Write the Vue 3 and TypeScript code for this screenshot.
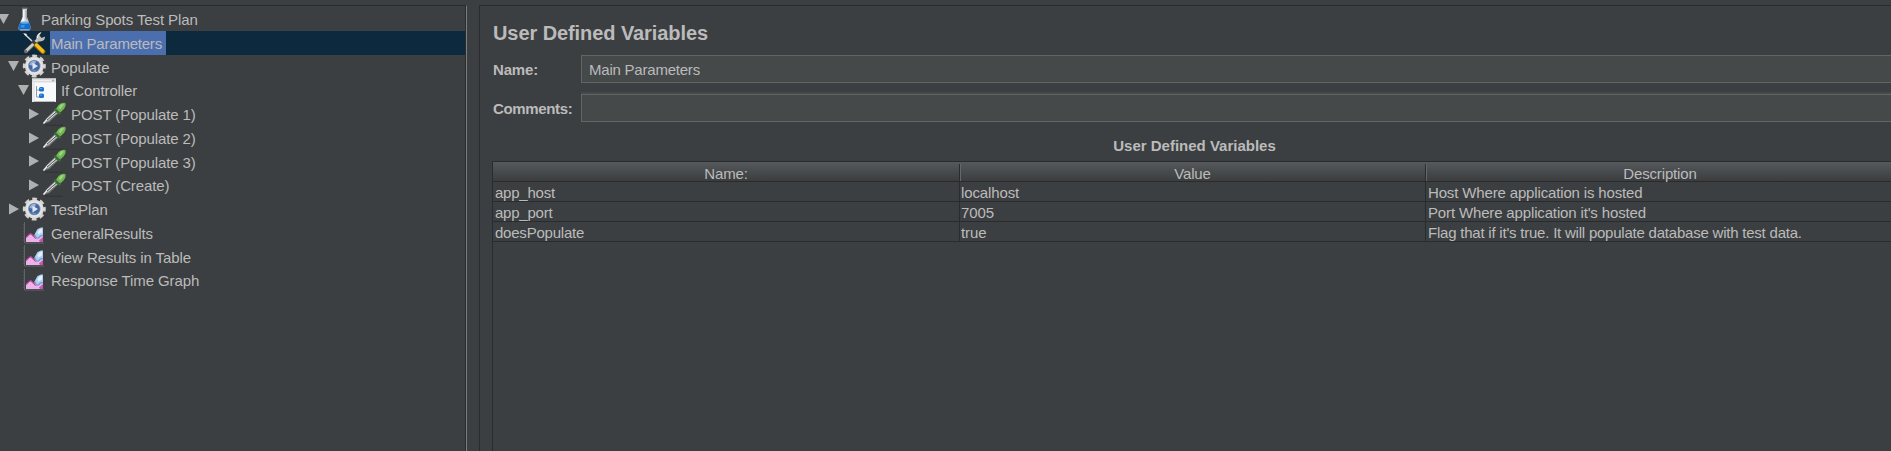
<script setup lang="ts">
type IconName = 'flask' | 'tools' | 'gear' | 'controller' | 'dropper' | 'graph'

interface TreeNode {
  label: string
  icon: IconName
  depth: number
  state: 'open' | 'closed' | 'leaf'
  selected?: boolean
}

interface Variable {
  name: string
  value: string
  description: string
}

const nodes: TreeNode[] = [
  { label: 'Parking Spots Test Plan', icon: 'flask', depth: 0, state: 'open' },
  { label: 'Main Parameters', icon: 'tools', depth: 1, state: 'leaf', selected: true },
  { label: 'Populate', icon: 'gear', depth: 1, state: 'open' },
  { label: 'If Controller', icon: 'controller', depth: 2, state: 'open' },
  { label: 'POST (Populate 1)', icon: 'dropper', depth: 3, state: 'closed' },
  { label: 'POST (Populate 2)', icon: 'dropper', depth: 3, state: 'closed' },
  { label: 'POST (Populate 3)', icon: 'dropper', depth: 3, state: 'closed' },
  { label: 'POST (Create)', icon: 'dropper', depth: 3, state: 'closed' },
  { label: 'TestPlan', icon: 'gear', depth: 1, state: 'closed' },
  { label: 'GeneralResults', icon: 'graph', depth: 1, state: 'leaf' },
  { label: 'View Results in Table', icon: 'graph', depth: 1, state: 'leaf' },
  { label: 'Response Time Graph', icon: 'graph', depth: 1, state: 'leaf' },
]

const variables: Variable[] = [
  { name: 'app_host', value: 'localhost', description: 'Host Where application is hosted' },
  { name: 'app_port', value: '7005', description: "Port Where application it's hosted" },
  {
    name: 'doesPopulate',
    value: 'true',
    description: "Flag that if it's true. It will populate database with test data.",
  },
]
</script>

<template>
  <div class="window">
    <aside class="tree">
      <div
        v-for="node in nodes"
        :key="node.label"
        class="row"
        :class="['depth-' + node.depth, { selected: node.selected }]"
      >
        <svg class="arrow" viewBox="0 0 11 12">
          <path v-if="node.state === 'open'" d="M0 1H11L5.5 11Z" fill="#b0b0b0" />
          <path v-else-if="node.state === 'closed'" d="M1 .5V11.5L11 6Z" fill="#b0b0b0" />
        </svg>

        <svg v-if="node.icon === 'flask'" class="icon" viewBox="0 0 24 24">
          <path d="M10.5 2V10L6.4 20.5Q6 22.8 7.7 22.8H17.7Q19.4 22.5 18.8 20.5L15 10V2Z" fill="#cfd3d6" />
          <path d="M11 3V10L9 15H12.5V3Z" fill="#f5f6f7" />
          <path d="M13.7 3V10L15.5 15L14.7 8V3Z" fill="#93999e" />
          <path d="M8.3 15.5H17L19 21Q18.8 22.8 17.4 22.8H7.7Q6 22.5 6.4 20.7Z" fill="#176dcc" />
          <path d="M9.5 18H13L12 20.5H8.5Z" fill="#3b94e4" />
          <ellipse cx="12.7" cy="15.7" rx="4.3" ry="1.1" fill="#62a9e8" />
          <path d="M10 1.3H15.5" stroke="#74797d" stroke-width="1.3" />
          <path d="M8 23H17.5" stroke="#b5cadd" />
        </svg>

        <svg v-else-if="node.icon === 'tools'" class="icon" viewBox="0 0 24 24">
          <path d="M2.5 3L11 11" stroke="#d8dad8" stroke-width="1.5" />
          <path d="M1 2L5 3L4 5Z" fill="#e8e8e5" />
          <path d="M4 20.3L16 9" stroke="#5f6260" stroke-width="4.2" stroke-linecap="round" />
          <path d="M4 20L16 8.5" stroke="#cdcdc7" stroke-width="2.5" stroke-linecap="round" />
          <path d="M15 10Q13 5 17 2L19.5 1.3L17.5 4.5L19.7 7L23 5.5Q23 10.3 18 10.5Z" fill="#bcbdb8" />
          <path d="M15.4 7Q15.5 3.5 18.5 1.7" fill="none" stroke="#f5f5f2" />
          <path d="M10 10L14 13" stroke="#3f4141" stroke-width="3" />
          <path d="M14.5 14.5L21 20.7" stroke="#8f6807" stroke-width="4.8" stroke-linecap="round" />
          <path d="M14.5 14L20.8 20.2" stroke="#f5bd16" stroke-width="3.3" stroke-linecap="round" />
          <circle cx="4" cy="20" r=".9" fill="#4b4d4d" />
        </svg>

        <svg v-else-if="node.icon === 'gear'" class="icon" viewBox="0 0 24 24">
          <circle cx="12.3" cy="12" r="10" fill="none" stroke="#d1d1d1" stroke-width="3" stroke-dasharray="4.7 3.154" stroke-dashoffset="2.35" />
          <circle cx="12.3" cy="12" r="9.5" fill="#d9d9d9" />
          <circle cx="12.3" cy="12" r="8" fill="#e8e6e3" />
          <circle cx="12.3" cy="12" r="6.3" fill="#8c9ab7" />
          <circle cx="12.3" cy="12" r="5.5" fill="#4266a2" />
          <path d="M7.3 11Q9 6 14 7L12.3 12Z" fill="#b8c9e3" opacity=".75" />
          <path d="M10.5 8.7L16 12L10.5 15.5Z" fill="#dce8f7" />
          <path d="M8.5 15Q12.3 18.5 16 15Q14 17 8.5 15Z" fill="#78addd" />
        </svg>

        <svg v-else-if="node.icon === 'controller'" class="icon" viewBox="0 0 24 24">
          <path d="M0 .5H24V24H0Z" fill="#f8f9fa" />
          <path d="M0 .5H24V4.5H0Z" fill="#dddde0" />
          <path d="M1 2.5H19" stroke="#eeeef0" />
          <path d="M20 2.5H22" stroke="#a8a8af" stroke-width="1.5" />
          <path d="M0 4.5H3V24H0Z" fill="#e9ebed" />
          <path d="M4.5 8V19H8M4.5 12H8" fill="none" stroke="#949ba3" />
          <rect x="7" y="9" width="5" height="4.5" rx="1.5" fill="#1d6fd0" />
          <rect x="7" y="15.5" width="5" height="4.5" rx="1.5" fill="#1d6fd0" />
          <path d="M8 10.5H10M8 17H10" stroke="#5aa9f0" />
          <path d="M2 23.5H23" stroke="#b7bbc0" />
        </svg>

        <svg v-else-if="node.icon === 'dropper'" class="icon" viewBox="0 0 24 24">
          <path d="M3 23.2H21" stroke="#303234" />
          <path d="M.7 22L4 16.5L13.5 7.2L17.3 10.6L7.3 20Z" fill="#747879" />
          <path d="M1.5 21.5L6 16.5L14.5 8.7" fill="none" stroke="#e9eaea" stroke-width="1.5" />
          <path d="M5.5 18.8L16 9.8" stroke="#f1f1f1" stroke-width=".9" />
          <path d="M5 18L15.5 9" stroke="#4b4e50" stroke-width=".9" />
          <path d="M12.8 6L19 11.3L17.2 13L11.8 8Z" fill="#3a7133" />
          <path d="M14 6.8L16.5 3Q20.5-.2 23.2 1Q24.8 3.7 21.5 7.4L18.2 10.5Z" fill="#6fb654" />
          <path d="M16.5 5.5L19.5 2L22 2.5L18.5 7Z" fill="#a0d57f" />
        </svg>

        <svg v-else class="icon" viewBox="0 0 24 24">
          <path d="M2.5 1V22H22" fill="none" stroke="#606466" />
          <path d="M1 4H2M1 7H2M1 10H2M1 13H2M1 16H2M1 19H2" stroke="#595d5f" />
          <path d="M4 21V16.5L7.5 13.5L9 13L12 15.5L14 18L16 16L21 14V21Z" fill="#efb0e9" />
          <path d="M4 16.7L7.3 13.3L9 12.7L12 15.5L14 17.5" fill="none" stroke="#b4479b" stroke-width="1.2" />
          <path d="M12.7 15.5Q12 13.5 13.5 11.5L15.5 8L19 6.5H21V15L17.5 16.5L16 18H14Z" fill="#aacdf4" />
          <path d="M15.4 11.5L17 8.8L20 7.5V11.5L16.5 13.5Z" fill="#e4f1fe" />
          <path d="M12.8 14L14.3 17H16.5L18.5 15L21 14.5" fill="none" stroke="#7b8dc0" stroke-width="1.1" />
          <path d="M17 19.5L21 16V21H18Z" fill="#c654b2" />
        </svg>
        <span class="label">{{ node.label }}</span>
      </div>
    </aside>

    <main class="editor">
      <h1>User Defined Variables</h1>
      <div class="field name-field">
        <label>Name:</label>
        <div class="input">Main Parameters</div>
      </div>
      <div class="field comments-field">
        <label>Comments:</label>
        <div class="input"></div>
      </div>
      <h2>User Defined Variables</h2>
      <div class="table">
        <div class="line head">
          <span>Name:</span>
          <span>Value</span>
          <span>Description</span>
        </div>
        <div v-for="variable in variables" :key="variable.name" class="line">
          <span>{{ variable.name }}</span>
          <span class="value">{{ variable.value }}</span>
          <span :class="{ short: variable.description.length < 40 }">{{ variable.description }}</span>
        </div>
      </div>
    </main>
  </div>
</template>

<style>
body {
  margin: 0;
  overflow: hidden;
  background: #3c3f41;
}
</style>

<style scoped>
.window {
  display: flex;
  gap: 12px;
  width: 1891px;
  height: 451px;
  padding-top: 5px;
  box-sizing: border-box;
  overflow: hidden;
  background: #3c3f41;
  color: #bbb;
  font: 15px/20px "Liberation Sans", Arial, sans-serif;
  white-space: nowrap;
}

.tree {
  flex: none;
  width: 467px;
  box-sizing: border-box;
  padding-top: 1.1px;
  border-top: 1px solid #292b2d;
  border-right: 1px solid #7b7d7e;
  box-shadow: inset -1px 0 #292b2d;
}

.row {
  display: flex;
  align-items: center;
  height: 23.75px;
  margin-right: 1px;
}

.selected {
  background: #0d293e;
}

.arrow {
  flex: none;
  width: 11px;
  height: 12px;
}

.icon {
  flex: none;
  width: 24px;
  height: 24px;
  margin-left: 3px;
}

.depth-0 .arrow {
  margin-left: -2px;
}

.depth-1 .arrow {
  margin-left: 8px;
}

.depth-2 .arrow {
  margin-left: 18px;
}

.depth-3 .arrow {
  margin-left: 28px;
}

.label {
  height: 100%;
  margin-left: 4px;
  padding: 0 4px 0 1px;
  line-height: 25px;
  letter-spacing: -0.1px;
}

.selected .label {
  background: #4b6eaf;
  letter-spacing: -0.22px;
}

.editor {
  flex: none;
  width: 1420px;
  box-sizing: border-box;
  padding: 0 0 0 12px;
  border-top: 1px solid #292b2d;
  border-left: 1px solid #292b2d;
  display: flex;
  flex-direction: column;
}

h1 {
  margin: 15px 0 10px 1px;
  font-size: 20px;
  line-height: 24px;
  letter-spacing: -0.08px;
}

.field {
  display: flex;
  height: 28px;
}

.comments-field {
  margin-top: 11px;
}

.comments-field .input {
  box-shadow: 0 -2px #46484a;
}

label {
  width: 88px;
  margin-left: 1px;
  font-weight: bold;
  line-height: 29px;
  letter-spacing: -0.15px;
}

.comments-field label {
  letter-spacing: -0.35px;
}

.input {
  flex: 1;
  box-sizing: border-box;
  padding-left: 7px;
  border: 1px solid #646464;
  background: #45494a;
  line-height: 28px;
  letter-spacing: -0.22px;
}

h2 {
  margin: 14px 0 5px -2px;
  font-size: 15px;
  line-height: 20px;
  text-align: center;
}

.table {
  flex: 1;
  border-top: 1px solid #292b2d;
  border-left: 1px solid #292b2d;
}

.line {
  display: grid;
  grid-template-columns: 467px 466px 1fr;
  height: 20px;
  box-sizing: border-box;
  border-bottom: 1px solid #292b2d;
}

.line span {
  padding-left: 2px;
  border-right: 1px solid #292b2d;
  line-height: 22px;
  height: 19px;
  letter-spacing: -0.22px;
}

.line span:last-child {
  border-right: 0;
}

.line .short {
  letter-spacing: -0.15px;
}

.line .value {
  padding-left: 1px;
  letter-spacing: -0.12px;
}

.head {
  background: linear-gradient(#55595b, #3b3d3f);
}

.head span {
  height: 17px;
  margin-top: 2px;
  padding: 0;
  line-height: 20px;
  text-align: center;
  letter-spacing: -0.15px;
}

.head span + span {
  box-shadow: inset 1px 0 #64686a;
}

.head span:last-child {
  padding-right: 5px;
}
</style>
